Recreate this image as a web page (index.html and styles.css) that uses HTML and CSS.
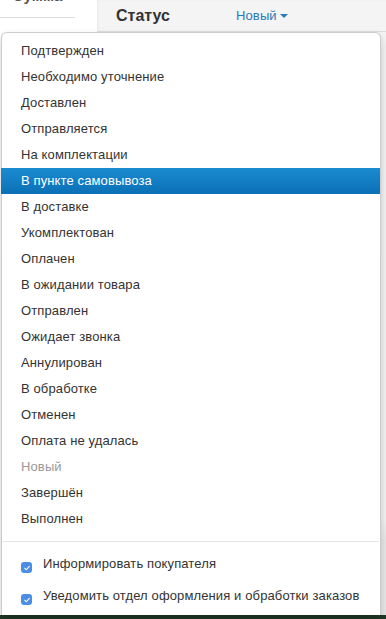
FILE: index.html
```html
<!DOCTYPE html>
<html lang="ru">
<head>
    <meta charset="UTF-8">
    <title>Статус заказа</title>
    <link rel="stylesheet" href="styles.css">
</head>
<body>

<div id="page">
    <div id="leftCol">
        <div class="sumHead"><span>Сумма</span></div>
    </div>
    <div id="rightCol">
        <div class="statusRow">
            <div class="statusLabel">Статус</div>
            <a class="statusToggle" href="#">Новый <span class="caret"></span></a>
        </div>
    </div>

    <div id="statusMenu">
        <ul class="items">
            <li><a href="#">Подтвержден</a></li>
            <li><a href="#">Необходимо уточнение</a></li>
            <li><a href="#">Доставлен</a></li>
            <li><a href="#">Отправляется</a></li>
            <li><a href="#">На комплектации</a></li>
            <li class="active"><a href="#">В пункте самовывоза</a></li>
            <li><a href="#">В доставке</a></li>
            <li><a href="#">Укомплектован</a></li>
            <li><a href="#">Оплачен</a></li>
            <li><a href="#">В ожидании товара</a></li>
            <li><a href="#">Отправлен</a></li>
            <li><a href="#">Ожидает звонка</a></li>
            <li><a href="#">Аннулирован</a></li>
            <li><a href="#">В обработке</a></li>
            <li><a href="#">Отменен</a></li>
            <li><a href="#">Оплата не удалась</a></li>
            <li class="disabled"><a href="#">Новый</a></li>
            <li><a href="#">Завершён</a></li>
            <li><a href="#">Выполнен</a></li>
        </ul>
        <div class="divider"></div>
        <label class="check">
            <span class="box"><svg viewBox="0 0 12 12" width="8" height="8"><path d="M2.5 6.3 L5 8.6 L9.5 3.6" fill="none" stroke="#fff" stroke-width="1.6" stroke-linecap="round" stroke-linejoin="round"/></svg></span>
            Информировать покупателя
        </label>
        <label class="check">
            <span class="box"><svg viewBox="0 0 12 12" width="8" height="8"><path d="M2.5 6.3 L5 8.6 L9.5 3.6" fill="none" stroke="#fff" stroke-width="1.6" stroke-linecap="round" stroke-linejoin="round"/></svg></span>
            Уведомить отдел оформления и обработки заказов
        </label>
    </div>

    <div id="bottomBar"></div>
</div>

</body>
</html>
```

FILE: styles.css
```css
body {
    margin: 0;
    font-family: "Liberation Sans", Arial, sans-serif;
    font-size: 13px;
    letter-spacing: 0.12px;
    color: #333;
    background: #fff;
    overflow: hidden;
}

#page {
    position: relative;
    width: 386px;
    height: 619px;
    display: grid;
    grid-template-columns: 97px 1fr;
    grid-template-rows: 1fr 4px;
    overflow: hidden;
}

#leftCol {
    background: #fff;
}

.sumHead {
    width: 75px;
    height: 17px;
    border-bottom: 1px solid #ddd;
    overflow: hidden;
    text-align: center;
}

.sumHead span {
    display: block;
    margin-top: -13px;
    font-weight: bold;
    font-size: 15px;
    color: #555;
}

#rightCol {
    background: linear-gradient(#f4f4f4 0, #f4f4f4 520px, #e9e9e9 540px);
    box-shadow: inset 1px 0 2px rgba(0, 0, 0, 0.05);
}

.statusRow {
    height: 32px;
    border-bottom: 1px solid #ddd;
    display: flex;
    align-items: center;
    box-sizing: border-box;
    padding-left: 19px;
}

.statusLabel {
    font-weight: bold;
    font-size: 16px;
    letter-spacing: 0;
    color: #333;
    width: 120px;
}

.statusToggle {
    color: #2a7ab9;
    text-decoration: none;
    font-size: 13px;
}

.caret {
    display: inline-block;
    width: 0;
    height: 0;
    border-left: 4px solid transparent;
    border-right: 4px solid transparent;
    border-top: 4px solid #2a7ab9;
    vertical-align: middle;
    margin-top: -2px;
}

#bottomBar {
    grid-column: 1 / 3;
    background: #1f3826;
}

#statusMenu {
    position: absolute;
    top: 32px;
    left: 1px;
    width: 380px;
    height: 583px;
    box-sizing: border-box;
    background: #fff;
    border: 1px solid rgba(0, 0, 0, 0.2);
    border-bottom: none;
    border-radius: 6px 6px 0 0;
    box-shadow: 0 5px 10px rgba(0, 0, 0, 0.2);
    padding-top: 5px;
}

.items {
    list-style: none;
    margin: 0;
    padding: 0;
}

.items a {
    display: block;
    padding: 0 19px;
    line-height: 26px;
    color: #333;
    text-decoration: none;
    white-space: nowrap;
}

.items .active a {
    color: #fff;
    background: linear-gradient(#1b8bd0, #0b70b6);
    margin: 0 0 0 -1px;
    padding-left: 20px;
}

.items .disabled a {
    color: #999;
}

.divider {
    height: 1px;
    margin: 9px 1px 12px;
    background: #e5e5e5;
}

.check {
    display: flex;
    align-items: flex-start;
    gap: 11px;
    padding-left: 19px;
    line-height: 20px;
    height: 32px;
    color: #333;
}

.box {
    flex: none;
    width: 11px;
    height: 11px;
    margin-top: 8px;
    border-radius: 3px;
    background: #4a8fe3;
    display: flex;
    align-items: center;
    justify-content: center;
}
```
